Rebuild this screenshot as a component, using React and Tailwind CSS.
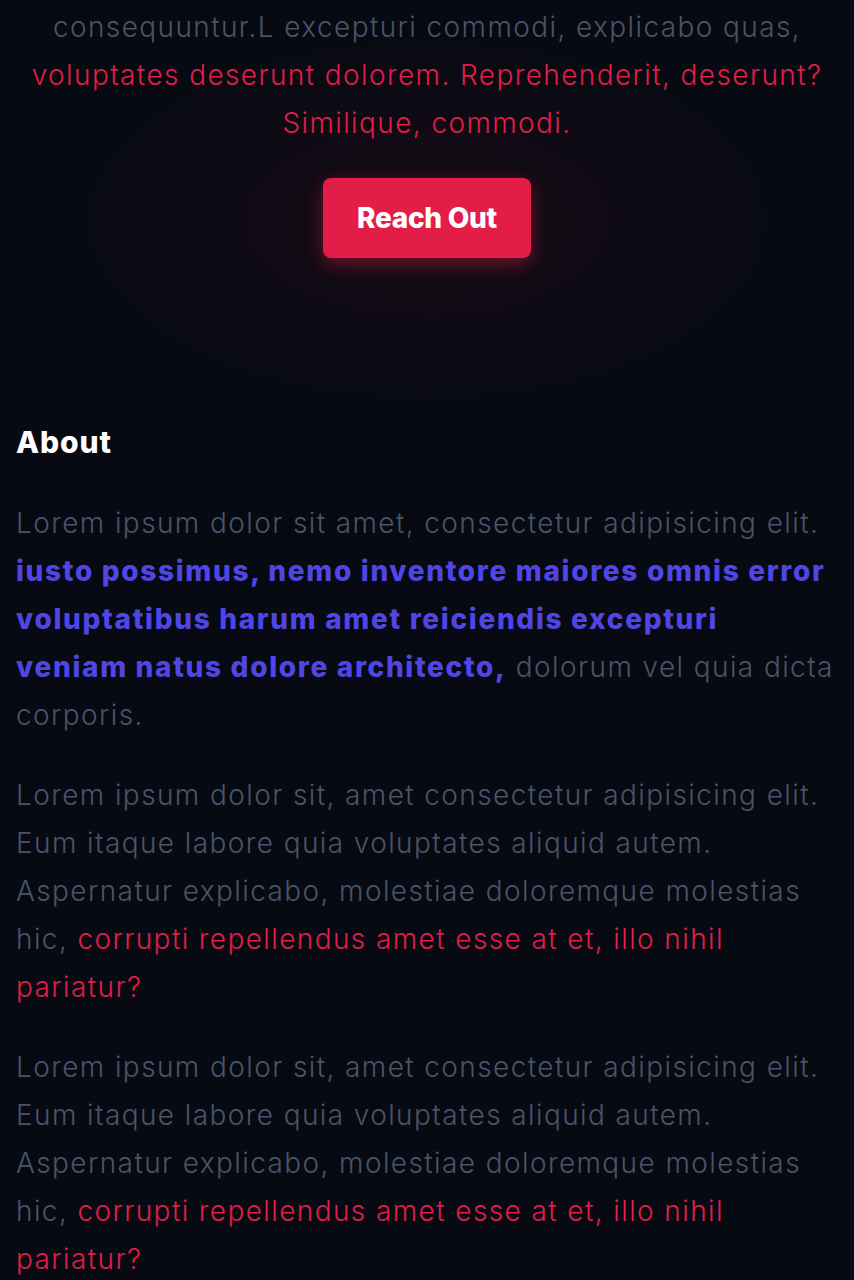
export default function App() {
  const font = { fontFamily: "Inter, 'Noto Sans', sans-serif" };
  return (
    <div className="min-h-[1280px] w-full bg-[#070a12] overflow-hidden" style={font}>
      <section className="relative px-4 pt-[3px] pb-[160px] text-center bg-[radial-gradient(ellipse_380px_200px_at_50%_220px,rgba(225,29,72,0.07),transparent)]">
        <p className="text-[28px] leading-[48px] font-light tracking-[0.05em] text-[#475569]">
          consequuntur.L excepturi commodi, explicabo quas,
          <br />
          <span className="text-[#e11d48]">
            voluptates deserunt dolorem. Reprehenderit, deserunt?
            <br />
            Similique, commodi.
          </span>
        </p>
        <div className="mt-[31px] flex justify-center">
          <button className="h-[80px] w-[208px] rounded-lg bg-[#e11d48] text-[28px] font-extrabold tracking-[-0.01em] text-white shadow-[0_6px_18px_rgba(225,29,72,0.45)]">
            Reach Out
          </button>
        </div>
      </section>
      <section className="px-4">
        <h2 className="text-[30px] leading-[48px] font-extrabold tracking-[0.03em] text-white">About</h2>
        <div className="mt-[33px] flex flex-col gap-8 text-[28px] leading-[48px] font-light tracking-[0.05em] text-[#475569]">
          <p>
            Lorem ipsum dolor sit amet, consectetur adipisicing elit.{" "}
            <span className="font-extrabold text-[#4f46e5] tracking-[0.06em]">
              iusto possimus, nemo inventore maiores omnis error voluptatibus harum amet reiciendis excepturi
              <br />
              veniam natus dolore architecto,
            </span>{" "}
            dolorum vel quia dicta corporis.
          </p>
          <p>
            Lorem ipsum dolor sit, amet consectetur adipisicing elit. Eum itaque labore quia voluptates aliquid autem. Aspernatur explicabo, molestiae doloremque molestias hic,{" "}
            <span className="text-[#e11d48]">corrupti repellendus amet esse at et, illo nihil pariatur?</span>
          </p>
          <p>
            Lorem ipsum dolor sit, amet consectetur adipisicing elit. Eum itaque labore quia voluptates aliquid autem. Aspernatur explicabo, molestiae doloremque molestias hic,{" "}
            <span className="text-[#e11d48]">corrupti repellendus amet esse at et, illo nihil pariatur?</span>
          </p>
        </div>
      </section>
    </div>
  );
}
